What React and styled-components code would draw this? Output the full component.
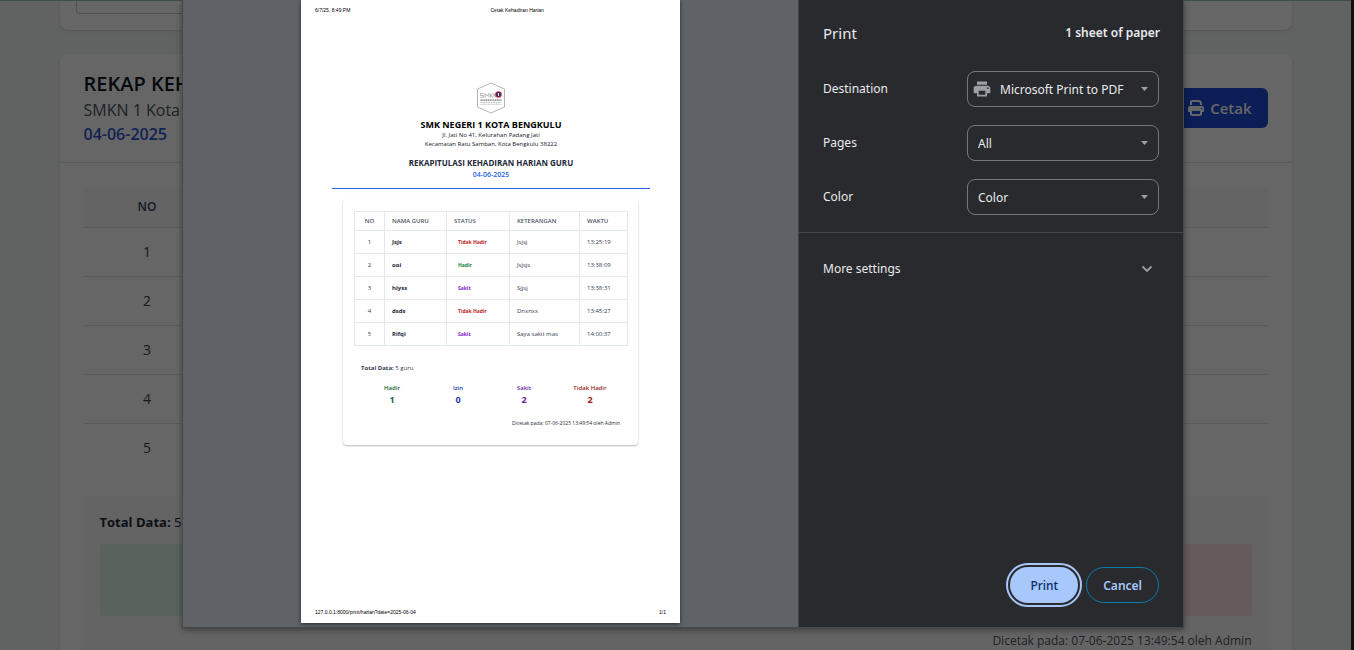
import React from "react";
import styled, { createGlobalStyle } from "styled-components";

const GlobalStyle = createGlobalStyle`
  * { box-sizing: border-box; }
  body {
    margin: 0;
    overflow: hidden;
    font-family: "Open Sans", "Noto Sans", sans-serif;
    color: #1f2937;
  }
  h1, h2, p, dl, dd, dt { margin: 0; }
`;

const Screen = styled.div`
  position: relative;
  height: 100vh;
  overflow: hidden;
  background: #f0f7f2;
  border-right: 3px solid #101010;
`;

const Page = styled.main`
  max-width: 1280px;
  margin: 0 auto;
  padding: 0 24px;
  display: flex;
  flex-direction: column;
  gap: 24px;
`;

const Card = styled.section`
  background: #fff;
  border-radius: 8px;
  box-shadow: 0 1px 3px rgba(0, 0, 0, 0.15);
`;

const FilterCard = styled(Card)`
  padding: 0 16px 16px;
  border-radius: 0 0 8px 8px;
`;

const DateField = styled.input`
  display: block;
  width: 320px;
  height: 14px;
  border: 1px solid #c3c7cd;
  border-top: 0;
  border-radius: 0 0 4px 4px;
  background: #fff;
`;

const CardHeader = styled.header`
  display: flex;
  justify-content: space-between;
  align-items: center;
  padding: 16px 24px;
  border-bottom: 1px solid #dfe1e5;
`;

const ReportTitle = styled.h1`
  font-size: 20px;
  font-weight: 600;
  line-height: 28px;
  color: #111827;
`;

const ReportLine = styled.p`
  font-size: 16px;
  line-height: 24px;
  font-weight: ${(p) => (p.$accent ? 600 : 400)};
  color: ${(p) => (p.$accent ? "#2f56cf" : "#4b5563")};
`;

const PrintLink = styled.button`
  display: flex;
  align-items: center;
  gap: 6px;
  height: 40px;
  padding: 0 16px;
  border: 0;
  border-radius: 6px;
  background: #1d4bd8;
  color: #fff;
  font: 600 15px/24px "Open Sans", sans-serif;
`;

const CardBody = styled.div`
  padding: 24px;
  display: flex;
  flex-direction: column;
  gap: 24px;
`;

const RecapTable = styled.table`
  width: 100%;
  border-collapse: separate;
  border-spacing: 0;
  font-size: 14px;
  line-height: 20px;
  text-align: center;

  th {
    height: 41px;
    padding: 0;
    font-size: 12px;
    font-weight: 600;
    color: #374151;
    background: #f9fafb;
    border-bottom: 1px solid #dfe1e5;
  }
  th:first-child { width: 127px; }
  td {
    height: 49px;
    padding: 0;
    color: #374151;
    border-bottom: 1px solid #dfe1e5;
  }
  tr:last-child td { height: 48px; border-bottom: 0; }
`;

const Summary = styled.div`
  padding: 16px;
  border-radius: 8px;
  background: #fafafa;
`;

const SummaryTotal = styled.p`
  font-size: 13px;
  line-height: 20px;
  margin-bottom: 12px;
`;

const Tiles = styled.div`
  display: grid;
  grid-template-columns: repeat(4, 1fr);
  gap: 16px;
  margin-bottom: 16px;
`;

const Tile = styled.div`
  height: 72px;
  border-radius: 4px;
  background: ${(p) => p.$tone};
`;

const PrintedAt = styled.p`
  font-size: 12px;
  line-height: 18px;
  text-align: right;
  color: #4b5563;
`;

const Overlay = styled.div`
  position: absolute;
  inset: 0 -3px 0 0;
  padding-left: 12px;
  display: flex;
  justify-content: center;
  align-items: flex-start;
  background: rgba(0, 0, 0, 0.6);
  box-shadow: inset 0 1px 0 #3f4c47;
`;

const Dialog = styled.div`
  display: flex;
  width: 1002px;
  max-width: 100%;
  height: calc(100vh - 22px);
  border: 1px solid #434a4b;
  border-top: 0;
  background: #292a2d;
  box-shadow: 0 2px 6px rgba(0, 0, 0, 0.4);
`;

const Preview = styled.div`
  flex: 1;
  display: flex;
  justify-content: center;
  padding-bottom: 4px;
  background: #5f6368;
`;

const Sheet = styled.article`
  width: 379px;
  padding: 7px 14px 8px;
  display: flex;
  flex-direction: column;
  background: #fff;
  box-shadow: 0 1px 4px rgba(0, 0, 0, 0.6);
`;

const RunningHead = styled.div`
  display: grid;
  grid-template-columns: 1fr 1fr;
  font: 5px/6px "Liberation Sans", sans-serif;
  color: #000;
`;

const RunningFoot = styled.div`
  display: flex;
  justify-content: space-between;
  margin-top: auto;
  font: 5px/6px "Liberation Sans", sans-serif;
  color: #000;
`;

const Letterhead = styled.header`
  margin: 69px 16px 0 17px;
  padding-bottom: 7px;
  display: flex;
  flex-direction: column;
  align-items: center;
  border-bottom: 1px solid #2563eb;
  text-align: center;
`;

const SchoolName = styled.h1`
  margin-top: 4px;
  font-size: 9px;
  line-height: 13px;
  font-weight: 700;
  color: #000;
`;

const Address = styled.p`
  font-size: 6px;
  line-height: 9px;
  color: #111827;
`;

const SheetTitle = styled.h2`
  margin-top: 8px;
  font-size: 8px;
  line-height: 12px;
  font-weight: 700;
  color: #1f2937;
`;

const SheetDate = styled.p`
  font-size: 7px;
  line-height: 12px;
  font-weight: 600;
  color: #2563eb;
`;

const SheetCard = styled.section`
  margin: 10px 28px 0;
  padding: 12px 10px 18px 11px;
  border-radius: 4px;
  box-shadow: 0 1px 2px rgba(0, 0, 0, 0.28);
`;

const SheetTable = styled.table`
  width: 100%;
  table-layout: fixed;
  border-collapse: collapse;
  font-size: 6px;
  line-height: 8px;
  color: #374151;

  th, td {
    height: 23px;
    padding: 0 7px;
    border: 1px solid #e2e8f0;
    text-align: left;
  }
  th {
    height: 19px;
    font-weight: 600;
    color: #4b5563;
  }
  th:first-child, td:first-child { padding: 0; text-align: center; }
`;

const Column = styled.col`
  width: ${(p) => p.$width};
`;

const TeacherCell = styled.td`
  font-weight: 700;
  color: #1f2937;
`;

const StatusText = styled.span`
  padding-left: 4px;
  font-size: 5px;
  font-weight: 700;
  color: ${(p) => p.$color};
`;

const SheetTotal = styled.p`
  margin: 17px 0 0 7px;
  font-size: 6px;
  line-height: 10px;
  color: #374151;
`;

const Stats = styled.dl`
  display: grid;
  grid-template-columns: repeat(4, 1fr);
  margin: 10px 5px 0;
`;

const Stat = styled.div`
  text-align: center;
  color: ${(p) => p.$color};

  dt { font-size: 6px; line-height: 11px; font-weight: 600; }
  dd { font-size: 9px; line-height: 12px; font-weight: 700; }
`;

const SheetPrintedAt = styled.p`
  margin: 13px 8px 0 0;
  font-size: 5px;
  line-height: 8px;
  text-align: right;
  color: #1f2937;
`;

const Sidebar = styled.aside`
  width: 385px;
  display: flex;
  flex-direction: column;
  border-left: 1px solid #43464a;
  background: #292a2d;
  color: #e8eaed;
  font-family: "Noto Sans", sans-serif;
  font-size: 12px;
  line-height: 20px;
`;

const SidebarHeader = styled.header`
  display: flex;
  justify-content: space-between;
  align-items: center;
  padding: 21px 23px 0 24px;

  h2 { font-size: 15px; line-height: 24px; font-weight: 400; }
`;

const Sheets = styled.span`
  font-weight: 600;
`;

const Settings = styled.form`
  display: flex;
  flex-direction: column;
  gap: 18px;
  padding: 26px 24px 17px;
  border-bottom: 1px solid #43464a;
`;

const SettingRow = styled.div`
  display: flex;
  justify-content: space-between;
  align-items: center;
`;

const SelectBox = styled.div`
  position: relative;
  width: 192px;
`;

const Select = styled.select`
  display: block;
  width: 100%;
  height: 36px;
  padding: 2px 24px 0 ${(p) => (p.$withIcon ? 32 : 10)}px;
  appearance: none;
  border: 1px solid #757779;
  border-radius: 8px;
  background: transparent;
  color: #e8eaed;
  font: 400 12px/20px "Noto Sans", sans-serif;
`;

const DeviceIcon = styled.svg`
  position: absolute;
  left: 5px;
  top: 8px;
  fill: #9aa0a6;
  pointer-events: none;
`;

const Arrow = styled.svg`
  position: absolute;
  right: 11px;
  top: 16px;
  fill: #9aa0a6;
  pointer-events: none;
`;

const MoreSettings = styled.button`
  display: flex;
  justify-content: space-between;
  align-items: center;
  padding: 26px 30px 26px 24px;
  border: 0;
  background: transparent;
  color: inherit;
  font: inherit;
`;

const Actions = styled.footer`
  display: flex;
  justify-content: flex-end;
  gap: 8px;
  margin-top: auto;
  padding: 0 24px 24px;
`;

const ActionButton = styled.button`
  height: 36px;
  padding: 2px ${(p) => (p.$primary ? 20 : 16)}px 0;
  border-radius: 18px;
  border: ${(p) => (p.$primary ? "0" : "1px solid #0b7cae")};
  outline: ${(p) => (p.$primary ? "2px solid #a8c7fa" : "none")};
  outline-offset: 2px;
  background: ${(p) => (p.$primary ? "#a8c7fa" : "transparent")};
  color: ${(p) => (p.$primary ? "#062e6f" : "#a8c7fa")};
  font: ${(p) => (p.$primary ? 500 : 600)} 12px/20px "Noto Sans", sans-serif;
`;

const TONES = {
  Hadir: "#15803d",
  Izin: "#1d4ed8",
  Sakit: "#7e22ce",
  "Tidak Hadir": "#b91c1c",
};

const RECORDS = [
  ["Jsjs", "Tidak Hadir", "Jsjsj", "13:25:19"],
  ["ooi", "Hadir", "Jsjsjs", "13:38:09"],
  ["hiyss", "Sakit", "Sjjsj", "13:38:31"],
  ["dsds", "Tidak Hadir", "Dnxnxx", "13:45:27"],
  ["Rifqi", "Sakit", "Saya sakit mas", "14:00:37"],
];

const STATS = [
  ["Hadir", 1, "#166534"],
  ["Izin", 0, "#1e40af"],
  ["Sakit", 2, "#6b21a8"],
  ["Tidak Hadir", 2, "#991b1b"],
];

function PrinterOutline() {
  return (
    <svg width="16" height="16" viewBox="0 0 512 512" fill="currentColor" aria-hidden="true">
      <path d="M128 0C92.700 0 64 28.700 64 64v96h64V64h226.700L384 93.300V160h64V93.300c0-17-6.700-33.300-18.700-45.300L400 18.700C388 6.700 371.700 0 354.700 0H128zM384 352v32 64H128v-64-16-16h256zm64 32h32c17.700 0 32-14.300 32-32v-96c0-35.300-28.700-64-64-64H64c-35.300 0-64 28.700-64 64v96c0 17.700 14.300 32 32 32h32v64c0 35.300 28.700 64 64 64h256c35.300 0 64-28.700 64-64v-64zm-16-88a24 24 0 1 1 0-48 24 24 0 1 1 0 48z" />
    </svg>
  );
}

function SchoolLogo() {
  return (
    <svg width="30" height="32" viewBox="0 0 30 32" role="img" aria-label="SMKN 1 Kota Bengkulu">
      <path d="M15 1 L28.500 7 V25 L15 31 L1.500 25 V7 Z" fill="#fff" stroke="#a3a3a3" strokeWidth="0.800" />
      <path
        d="M7.500 11.500H4.500V13.500H7.500V15.300H4.300M9 15.500V11.500L11 14L13 11.500V15.500M14.500 11.500V15.500M17 11.500L14.700 13.500L17 15.500M18 15.500V11.500L20 15.500"
        fill="none"
        stroke="#8b8b8b"
        strokeWidth="0.600"
      />
      <circle cx="22.500" cy="12.500" r="3.300" fill="#dc3150" />
      <circle cx="22.500" cy="12.500" r="2.400" fill="#27305e" />
      <path d="M22.500 11V14" stroke="#fff" strokeWidth="0.900" />
      <path d="M4.500 18.200H25.500" stroke="#777" strokeWidth="1.200" strokeDasharray="1.400 0.400" />
      <path d="M4.500 20.500H25.500M4.500 22.300H25.500" stroke="#b9b9b9" strokeWidth="0.800" strokeDasharray="2 0.500" />
    </svg>
  );
}

function Setting({ id, label, value, printer }) {
  return (
    <SettingRow>
      <label htmlFor={id}>{label}</label>
      <SelectBox>
        {printer && (
          <DeviceIcon width="20" height="20" viewBox="0 0 24 24" aria-hidden="true">
            <path d="M19 8H5c-1.660 0-3 1.340-3 3v6h4v4h12v-4h4v-6c0-1.660-1.340-3-3-3zm-3 11H8v-5h8v5zm3-7c-.550 0-1-.450-1-1s.450-1 1-1 1 .450 1 1-.450 1-1 1zm-1-9H6v4h12V3z" />
          </DeviceIcon>
        )}
        <Select id={id} defaultValue={value} $withIcon={printer}>
          <option>{value}</option>
        </Select>
        <Arrow width="7" height="4" viewBox="0 0 7 4" aria-hidden="true">
          <path d="M0 0H7L3.500 4Z" />
        </Arrow>
      </SelectBox>
    </SettingRow>
  );
}

function RecapPage() {
  return (
    <Page>
      <FilterCard>
        <DateField aria-label="Tanggal" type="text" />
      </FilterCard>
      <Card>
        <CardHeader>
          <div>
            <ReportTitle>REKAP KEHADIRAN</ReportTitle>
            <ReportLine>SMKN 1 Kota Bengkulu</ReportLine>
            <ReportLine $accent>04-06-2025</ReportLine>
          </div>
          <PrintLink type="button">
            <PrinterOutline />
            Cetak
          </PrintLink>
        </CardHeader>
        <CardBody>
          <RecapTable>
            <thead>
              <tr>
                <th>NO</th>
                <th />
              </tr>
            </thead>
            <tbody>
              {RECORDS.map(([name], i) => (
                <tr key={name}>
                  <td>{i + 1}</td>
                  <td />
                </tr>
              ))}
            </tbody>
          </RecapTable>
          <Summary>
            <SummaryTotal>
              <strong>Total Data:</strong> 5 guru
            </SummaryTotal>
            <Tiles>
              <Tile $tone="#dcf8e3" />
              <Tile $tone="#dbeafe" />
              <Tile $tone="#f3e8ff" />
              <Tile $tone="#fee2e2" />
            </Tiles>
            <PrintedAt>Dicetak pada: 07-06-2025 13:49:54 oleh Admin</PrintedAt>
          </Summary>
        </CardBody>
      </Card>
    </Page>
  );
}

function ReportSheet() {
  return (
    <Sheet>
      <RunningHead>
        <span>6/7/25, 8:49 PM</span>
        <span>Cetak Kehadiran Harian</span>
      </RunningHead>
      <Letterhead>
        <SchoolLogo />
        <SchoolName>SMK NEGERI 1 KOTA BENGKULU</SchoolName>
        <Address>Jl. Jati No 41, Kelurahan Padang Jati</Address>
        <Address>Kecamatan Ratu Samban, Kota Bengkulu 38222</Address>
        <SheetTitle>REKAPITULASI KEHADIRAN HARIAN GURU</SheetTitle>
        <SheetDate>04-06-2025</SheetDate>
      </Letterhead>
      <SheetCard>
        <SheetTable>
          <colgroup>
            <Column $width="30px" />
            <Column $width="62px" />
            <Column $width="63px" />
            <Column $width="70px" />
            <Column $width="auto" />
          </colgroup>
          <thead>
            <tr>
              {["NO", "NAMA GURU", "STATUS", "KETERANGAN", "WAKTU"].map((h) => (
                <th key={h}>{h}</th>
              ))}
            </tr>
          </thead>
          <tbody>
            {RECORDS.map(([name, status, note, time], i) => (
              <tr key={name}>
                <td>{i + 1}</td>
                <TeacherCell>{name}</TeacherCell>
                <td>
                  <StatusText $color={TONES[status]}>{status}</StatusText>
                </td>
                <td>{note}</td>
                <td>{time}</td>
              </tr>
            ))}
          </tbody>
        </SheetTable>
        <SheetTotal>
          <strong>Total Data:</strong> 5 guru
        </SheetTotal>
        <Stats>
          {STATS.map(([label, count, color]) => (
            <Stat key={label} $color={color}>
              <dt>{label}</dt>
              <dd>{count}</dd>
            </Stat>
          ))}
        </Stats>
        <SheetPrintedAt>Dicetak pada: 07-06-2025 13:49:54 oleh Admin</SheetPrintedAt>
      </SheetCard>
      <RunningFoot>
        <span>127.0.0.1:8000/print/harian?date=2025-06-04</span>
        <span>1/1</span>
      </RunningFoot>
    </Sheet>
  );
}

export default function App() {
  return (
    <Screen>
      <GlobalStyle />
      <RecapPage />
      <Overlay>
        <Dialog role="dialog" aria-label="Print">
          <Preview>
            <ReportSheet />
          </Preview>
          <Sidebar>
            <SidebarHeader>
              <h2>Print</h2>
              <Sheets>1 sheet of paper</Sheets>
            </SidebarHeader>
            <Settings>
              <Setting id="destination" label="Destination" value="Microsoft Print to PDF" printer />
              <Setting id="pages" label="Pages" value="All" />
              <Setting id="color" label="Color" value="Color" />
            </Settings>
            <MoreSettings type="button">
              More settings
              <svg width="12" height="12" viewBox="0 0 12 12" fill="none" stroke="#9aa0a6" strokeWidth="1.800" aria-hidden="true">
                <path d="M1.500 3.500L6 8L10.500 3.500" />
              </svg>
            </MoreSettings>
            <Actions>
              <ActionButton type="button" $primary>Print</ActionButton>
              <ActionButton type="button">Cancel</ActionButton>
            </Actions>
          </Sidebar>
        </Dialog>
      </Overlay>
    </Screen>
  );
}
